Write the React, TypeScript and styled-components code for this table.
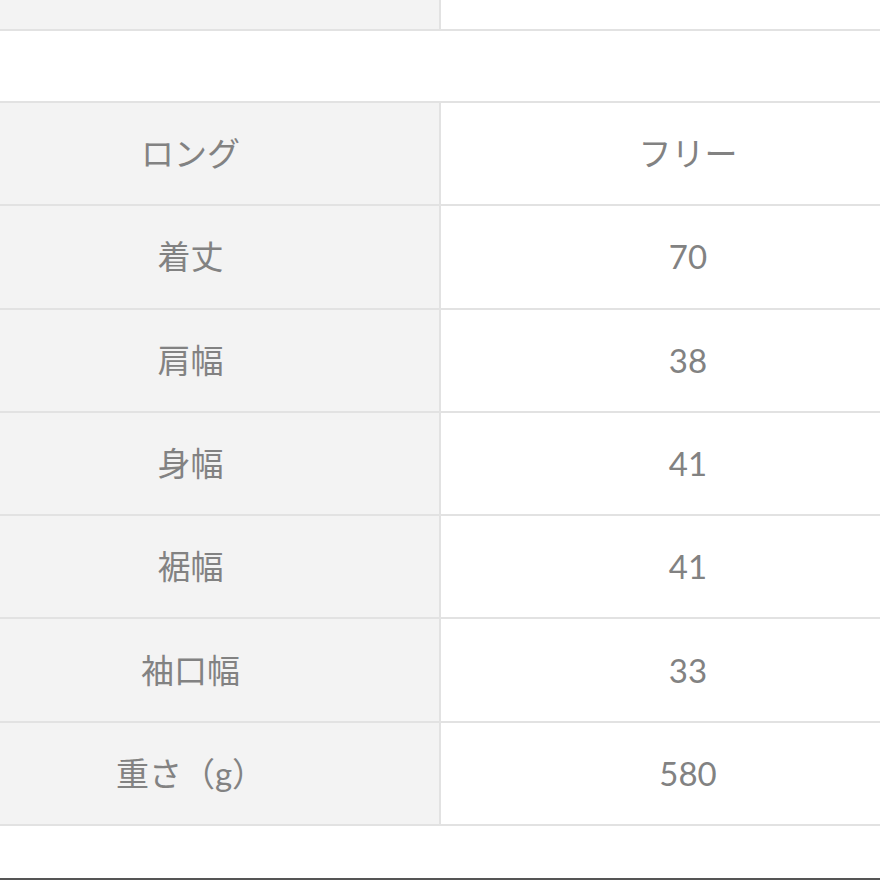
import React from 'react';
import styled, { createGlobalStyle } from 'styled-components';

const GlobalStyle = createGlobalStyle`
  html, body {
    margin: 0;
    padding: 0;
    background: #ffffff;
    overflow: hidden;
  }
  body {
    font-family: Lato, "Noto Sans CJK JP", sans-serif;
  }
`;

const Page = styled.div`
  width: 880px;
  height: 880px;
  overflow: hidden;
  display: flex;
  flex-direction: column;
`;

const Table = styled.table<{ $top: number }>`
  border-collapse: collapse;
  table-layout: fixed;
  width: 997px;
  margin-left: -60px;
  margin-top: ${(p) => p.$top}px;
`;

const Cell = styled.td<{ $head?: boolean; $h: number }>`
  height: ${(p) => p.$h}px;
  padding: 0;
  border: 2px solid #e2e2e2;
  background: ${(p) => (p.$head ? '#f3f3f3' : '#ffffff')};
  color: #828282;
  font-size: 33px;
  text-align: center;
  vertical-align: middle;
  line-height: 1;
`;

const BottomBar = styled.div`
  margin-top: auto;
  height: 2px;
  background: #555555;
`;

const rows: [string, string][] = [
  ['ロング', 'フリー'],
  ['着丈', '70'],
  ['肩幅', '38'],
  ['身幅', '41'],
  ['裾幅', '41'],
  ['袖口幅', '33'],
  ['重さ（g）', '580'],
];

const Columns = () => (
  <colgroup>
    <col style={{ width: 499 }} />
    <col />
  </colgroup>
);

const App = () => (
  <>
    <GlobalStyle />
    <Page>
      <Table $top={-2}>
        <Columns />
        <tbody>
          <tr>
            <Cell $head $h={29} />
            <Cell $h={29} />
          </tr>
        </tbody>
      </Table>
      <Table $top={70}>
        <Columns />
        <tbody>
          {rows.map(([label, value]) => (
            <tr key={label}>
              <Cell $head $h={101.3}>
                {label}
              </Cell>
              <Cell $h={101.3}>{value}</Cell>
            </tr>
          ))}
        </tbody>
      </Table>
      <BottomBar />
    </Page>
  </>
);

export default App;
